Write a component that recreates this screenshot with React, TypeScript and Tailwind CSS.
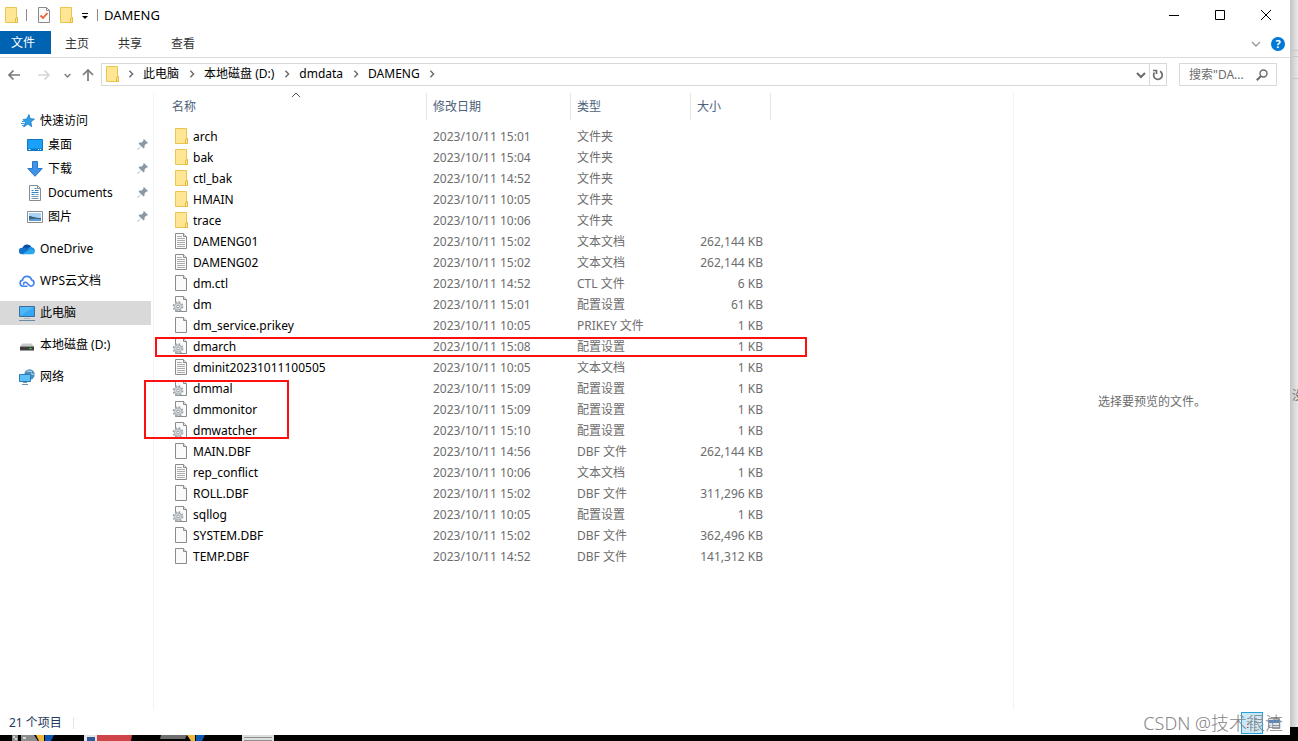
import type { ReactNode } from 'react';

// ─── Types ────────────────────────────────────────────────────────────────────

type FileKind = 'folder' | 'text' | 'blank' | 'config';

interface FileEntry {
    name: string;
    modified: string;
    type: string;
    size?: string;
    kind: FileKind;
}

// ─── Data ─────────────────────────────────────────────────────────────────────

const FILES: FileEntry[] = [
    { name: 'arch', modified: '2023/10/11 15:01', type: '文件夹', kind: 'folder' },
    { name: 'bak', modified: '2023/10/11 15:04', type: '文件夹', kind: 'folder' },
    { name: 'ctl_bak', modified: '2023/10/11 14:52', type: '文件夹', kind: 'folder' },
    { name: 'HMAIN', modified: '2023/10/11 10:05', type: '文件夹', kind: 'folder' },
    { name: 'trace', modified: '2023/10/11 10:06', type: '文件夹', kind: 'folder' },
    { name: 'DAMENG01', modified: '2023/10/11 15:02', type: '文本文档', size: '262,144 KB', kind: 'text' },
    { name: 'DAMENG02', modified: '2023/10/11 15:02', type: '文本文档', size: '262,144 KB', kind: 'text' },
    { name: 'dm.ctl', modified: '2023/10/11 14:52', type: 'CTL 文件', size: '6 KB', kind: 'blank' },
    { name: 'dm', modified: '2023/10/11 15:01', type: '配置设置', size: '61 KB', kind: 'config' },
    { name: 'dm_service.prikey', modified: '2023/10/11 10:05', type: 'PRIKEY 文件', size: '1 KB', kind: 'blank' },
    { name: 'dmarch', modified: '2023/10/11 15:08', type: '配置设置', size: '1 KB', kind: 'config' },
    { name: 'dminit20231011100505', modified: '2023/10/11 10:05', type: '文本文档', size: '1 KB', kind: 'text' },
    { name: 'dmmal', modified: '2023/10/11 15:09', type: '配置设置', size: '1 KB', kind: 'config' },
    { name: 'dmmonitor', modified: '2023/10/11 15:09', type: '配置设置', size: '1 KB', kind: 'config' },
    { name: 'dmwatcher', modified: '2023/10/11 15:10', type: '配置设置', size: '1 KB', kind: 'config' },
    { name: 'MAIN.DBF', modified: '2023/10/11 14:56', type: 'DBF 文件', size: '262,144 KB', kind: 'blank' },
    { name: 'rep_conflict', modified: '2023/10/11 10:06', type: '文本文档', size: '1 KB', kind: 'text' },
    { name: 'ROLL.DBF', modified: '2023/10/11 15:02', type: 'DBF 文件', size: '311,296 KB', kind: 'blank' },
    { name: 'sqllog', modified: '2023/10/11 10:05', type: '配置设置', size: '1 KB', kind: 'config' },
    { name: 'SYSTEM.DBF', modified: '2023/10/11 15:02', type: 'DBF 文件', size: '362,496 KB', kind: 'blank' },
    { name: 'TEMP.DBF', modified: '2023/10/11 14:52', type: 'DBF 文件', size: '141,312 KB', kind: 'blank' },
];

const CRUMBS = ['此电脑', '本地磁盘 (D:)', 'dmdata', 'DAMENG'];

// ─── Icons ────────────────────────────────────────────────────────────────────

function FolderIcon() {
    return (
        <svg width="13" height="16" viewBox="0 0 13 16" className="shrink-0" aria-hidden="true">
            <path d="M.5.5h11v10h1v5H.5z" fill="#ffe694" stroke="#eac54f" />
            <path d="M10.5 15.5v-4l2-1v5z" fill="#ffe9a2" stroke="#e5b93c" />
        </svg>
    );
}

function PageShape() {
    return (
        <>
            <path d="M3.5.5h8l3 3v12h-11z" fill="#fafafa" stroke="#8b8b8b" />
            <path d="M11.5.5v3h3" fill="#e4e4e4" stroke="#8b8b8b" />
        </>
    );
}

function FileIcon({ kind }: { kind: FileKind }) {
    if (kind === 'folder') {
        return <span className="flex w-4 shrink-0 pl-[3px]"><FolderIcon /></span>;
    }
    return (
        <svg width="16" height="16" viewBox="0 0 16 16" className="shrink-0" aria-hidden="true">
            <PageShape />
            {kind === 'text' && (
                <path d="M5 3.5h5M5 5.5h8M5 7.5h8M5 9.5h8M5 11.5h8M5 13.5h8" stroke="#adadad" />
            )}
            {kind === 'config' && (
                <>
                    <circle cx="6" cy="10.5" r="4.6" fill="#eceff1" stroke="#9aa3aa" strokeWidth="1.6" strokeDasharray="1.8 1.81" />
                    <circle cx="6" cy="10.5" r="3.6" fill="#d5dade" stroke="#a0a8ae" strokeWidth=".9" />
                    <circle cx="6" cy="10.5" r="1.4" fill="#fff" stroke="#8d959b" strokeWidth=".9" />
                </>
            )}
        </svg>
    );
}

interface ChevronProps {
    dir: 'down' | 'right' | 'up';
    size: number;
    className?: string;
    weight?: number;
}

function Chevron({ dir, size, className, weight = 1.4 }: ChevronProps) {
    const d = { down: 'M1 3l4 4 4-4', right: 'M3 1l4 4-4 4', up: 'M1 7l4-4 4 4' }[dir];
    return (
        <svg width={size} height={size} viewBox="0 0 10 10" fill="none" stroke="currentColor" strokeWidth={weight} className={className} aria-hidden="true">
            <path d={d} />
        </svg>
    );
}

function PinIcon() {
    return (
        <svg width="11" height="12" viewBox="0 0 11 12" className="shrink-0" aria-hidden="true">
            <path d="M7 0l4 4-1 .7-.7-.2-1.8 1.9.1 2.1-1.1 1L4 7 1 10.5l-.7.2.2-.8L3.9 7 1.5 4.5l1-1.1 2.1.1 1.9-1.8L6.2.8z" fill="#8b97a1" />
        </svg>
    );
}

const StarIcon = () => (
    <svg width="16" height="16" viewBox="0 0 16 16" aria-hidden="true">
        <path d="M10 1.500l1.200 4.100 4.300.5-3.600 2.700.8 5-3.800-2.700L4.700 14l1.600-4.800L4 6.500l3.600-.5z" fill="#2f9fe8" stroke="#1673bd" strokeWidth=".7" />
        <path d="M3 8.500h3M2 10.500h3M3 12.500h2" stroke="#3b96d8" />
    </svg>
);

const DesktopIcon = () => (
    <svg width="16" height="16" viewBox="0 0 16 16" aria-hidden="true">
        <path d="M.5 2.500h15v11H.5z" fill="#1ba1fb" stroke="#0b78c8" />
        <path d="M1 11.500h14v1.500H1z" fill="#0b78c8" />
        <path d="M1.500 12.500h2M11 12.500h1M13 12.500h1" stroke="#dff2ff" />
    </svg>
);

const DownloadIcon = () => (
    <svg width="16" height="16" viewBox="0 0 16 16" aria-hidden="true">
        <path d="M5.500.5h5v7h4.700L8 15.300.8 7.500h4.700z" fill="#3f94e9" stroke="#2b78c9" />
    </svg>
);

const DocumentIcon = () => (
    <svg width="16" height="16" viewBox="0 0 16 16" aria-hidden="true">
        <path d="M2.500.5h8l3 3v12h-11z" fill="#fff" stroke="#858c92" />
        <path d="M10.500.5v3h3" fill="none" stroke="#858c92" />
        <path d="M4.500 5.500h2M7.500 3.500h2M8 5.500h3.500M4.500 7.500h7M4.500 9.500h3" stroke="#2f86cc" />
        <path d="M8.500 9.500h3M4.500 11.500h7M4.500 13.500h7" stroke="#7d99b0" />
    </svg>
);

const PictureIcon = () => (
    <svg width="16" height="16" viewBox="0 0 16 16" aria-hidden="true">
        <path d="M.5 2.500h15v11H.5z" fill="#fff" stroke="#8d8d8d" />
        <path d="M2 4h12v8H2z" fill="#a9d4f5" />
        <path d="M2 7c3 0 6 2 12 2v3H2z" fill="#39667f" />
        <path d="M2 10.500c4-1 8-1 12 0V12H2z" fill="#5b9fd6" />
    </svg>
);

const OneDriveIcon = () => (
    <svg width="16" height="16" viewBox="0 0 16 16" aria-hidden="true">
        <path d="M3.500 7A5 5 0 0 1 12.700 6.200L8 10z" fill="#0a4fa6" />
        <path d="M3 13.200A3.200 3.200 0 0 1 3 6.800c2-.6 3.500.2 5 1.200l3 3-6 2.200z" fill="#1272cc" />
        <path d="M8 8.200c1.500-2 3-2.300 4.700-2 2 .4 3.300 1.900 3.300 3.800z" fill="#1a8ee0" />
        <path d="M3 13.200L9.500 8.900c2.500-1 4.500-.7 6 .6.900 1.900-.2 3.700-2.200 3.700z" fill="#2aa7ee" />
    </svg>
);

const WpsCloudIcon = () => (
    <svg width="16" height="16" viewBox="0 0 16 16" fill="none" stroke="#3f82f0" strokeWidth="1.600" aria-hidden="true">
        <path d="M8.500 13.200H4a3.100 3.100 0 0 1-.5-6.100 4.600 4.600 0 0 1 9-.2 3.200 3.200 0 0 1-.5 6.300c-2.500 0-3.500-4-5.700-4-1.600 0-2 1.600-1.300 2.600" />
    </svg>
);

const ComputerIcon = () => (
    <svg width="16" height="16" viewBox="0 0 16 16" aria-hidden="true">
        <path d="M.5 1.500h15v10H.5z" fill="#4fb9f7" stroke="#3b6f98" />
        <path d="M1 11L15 2v9z" fill="#36a7f2" />
        <path d="M5 13.500h6" stroke="#a9bccb" />
        <path d="M0 15.500h16" stroke="#6c8ba4" />
    </svg>
);

const DriveIcon = () => (
    <svg width="16" height="16" viewBox="0 0 16 16" aria-hidden="true">
        <path d="M3.500 6.500h9L15 9.500H1z" fill="#c9c9c9" />
        <path d="M1 9.500h14v4H1z" fill="#3d3d3d" />
        <path d="M10.500 11.500h2" stroke="#3ee03e" strokeWidth="1.400" />
    </svg>
);

const NetworkIcon = () => (
    <svg width="16" height="16" viewBox="0 0 16 16" aria-hidden="true">
        <circle cx="10.500" cy="5.500" r="5.200" fill="#4c8fbd" />
        <path d="M8 2.500c2-1.500 3 .5 5 0M12 5c1-1 1 1 3.500 0" fill="none" stroke="#b9dcf0" strokeWidth="1.200" />
        <path d="M.5 5.500h11v7H.5z" fill="#5cc0fa" stroke="#2f7db5" />
        <path d="M4 13.500h4M3 15.500h6" stroke="#7590a6" />
    </svg>
);

// ─── Title bar and ribbon ─────────────────────────────────────────────────────

function TitleBar() {
    return (
        <header className="flex h-[31px] items-center pr-px pb-px">
            <div className="flex flex-1 items-center pl-[5px]">
                <FolderIcon />
                <span className="ml-2 h-3 w-px bg-[#8c8c8c]" />
                <button type="button" aria-label="属性" className="ml-[10px]">
                    <svg width="14" height="16" viewBox="0 0 14 16" aria-hidden="true">
                        <path d="M1.500.5h8l3 3v12h-11z" fill="#fafafa" stroke="#8b8b8b" />
                        <path d="M9.500.5v3h3" fill="none" stroke="#8b8b8b" />
                        <path d="M3.500 8.500l2.500 2.500 4.500-5" fill="none" stroke="#e8642c" strokeWidth="1.800" />
                    </svg>
                </button>
                <button type="button" aria-label="新建文件夹" className="ml-[9px]"><FolderIcon /></button>
                <button type="button" aria-label="自定义快速访问工具栏" className="ml-2">
                    <svg width="8" height="8" viewBox="0 0 8 8" className="mt-[2px]" aria-hidden="true">
                        <path d="M1 1.500h6" stroke="#000" />
                        <path d="M1 4h6L4 7z" fill="#000" />
                    </svg>
                </button>
                <span className="ml-2 h-3 w-px bg-[#8c8c8c]" />
                <h1 className="ml-[6px] text-[13px] text-black">DAMENG</h1>
            </div>
            <button type="button" aria-label="最小化" className="flex h-full w-[46px] items-center justify-center">
                <svg width="10" height="10" viewBox="0 0 10 10" stroke="#000"><path d="M0 5.500h10" /></svg>
            </button>
            <button type="button" aria-label="最大化" className="flex h-full w-[46px] items-center justify-center">
                <svg width="10" height="10" viewBox="0 0 10 10" fill="none" stroke="#000"><path d="M.5.5h9v9h-9z" /></svg>
            </button>
            <button type="button" aria-label="关闭" className="flex h-full w-[46px] items-center justify-center">
                <svg width="10" height="10" viewBox="0 0 10 10" stroke="#000"><path d="M0 0l10 10M10 0L0 10" /></svg>
            </button>
        </header>
    );
}

function Ribbon() {
    return (
        <div className="flex h-[27px] items-start border-b border-[#dadbdc]">
            <button type="button" className="h-[23px] w-[51px] bg-[#0063b1] pr-[5px] text-white">文件</button>
            <div className="flex pr-px">
                {['主页', '共享', '查看'].map(tab => (
                    <button key={tab} type="button" className="h-[26px] w-[53px] pr-px text-[#333]">{tab}</button>
                ))}
            </div>
            <button type="button" aria-label="展开功能区" className="ml-auto flex h-[26px] items-center text-[#9a9a9a]">
                <Chevron dir="down" size={10} />
            </button>
            <button type="button" aria-label="帮助" className="mt-[6px] mr-[5px] ml-[10px] flex size-[14px] items-center justify-center rounded-full bg-[#0078d7] text-[11px] font-bold text-white">?</button>
        </div>
    );
}

// ─── Address bar ──────────────────────────────────────────────────────────────

function CrumbArrow({ className }: { className: string }) {
    return (
        <span className={`flex justify-center text-[#6b6b6b] ${className}`}>
            <Chevron dir="right" size={8} weight={1.8} />
        </span>
    );
}

function AddressBar() {
    return (
        <div className="flex h-[35px] items-start pt-[5px] pr-[13px]">
            <nav aria-label="导航" className="flex h-[24px] w-[101px] shrink-0 items-center pl-[8px] text-[#7a7a7a]">
                <button type="button" aria-label="后退">
                    <svg width="12" height="12" viewBox="0 0 12 12" fill="none" stroke="currentColor" strokeWidth="1.700"><path d="M12 6H1M5.500 1.500L1 6l4.500 4.500" /></svg>
                </button>
                <button type="button" aria-label="前进" className="ml-[18px] text-[#d6d6d6]">
                    <svg width="12" height="12" viewBox="0 0 12 12" fill="none" stroke="currentColor" strokeWidth="1.700"><path d="M0 6h11M6.500 1.500L11 6l-4.500 4.500" /></svg>
                </button>
                <button type="button" aria-label="最近浏览的位置" className="ml-[14px]"><Chevron dir="down" size={7} weight={2} /></button>
                <button type="button" aria-label="上移" className="ml-[11px]">
                    <svg width="12" height="12" viewBox="0 0 12 12" fill="none" stroke="currentColor" strokeWidth="1.700"><path d="M6 12V1M1 6l5-5 5 5" /></svg>
                </button>
            </nav>
            <div className="flex h-[23px] flex-1 border border-[#d9d9d9]">
                <div className="flex flex-1 items-center pb-[2px] pl-1 text-black">
                    <FolderIcon />
                    <CrumbArrow className="w-6" />
                    {CRUMBS.map(crumb => (
                        <span key={crumb} className="flex items-center">
                            <a href="#" className="leading-4">{crumb}</a>
                            <CrumbArrow className="w-[25px]" />
                        </span>
                    ))}
                </div>
                <button type="button" aria-label="以前的位置" className="flex w-4 items-center justify-center text-[#6b6b6b]"><Chevron dir="down" size={10} weight={2} /></button>
                <button type="button" aria-label="刷新" className="flex w-[17px] items-center justify-center border-l border-[#d9d9d9] text-[#6b6b6b]">
                    <svg width="12" height="12" viewBox="0 0 12 12" fill="none" stroke="currentColor" strokeWidth="1.700" aria-hidden="true">
                        <path d="M2.500 3.500A4.300 4.300 0 1 0 8 2.300" />
                        <path d="M1 1.500h3.500V5" />
                    </svg>
                </button>
            </div>
            <label className="ml-3 flex h-[23px] w-[98px] items-center border border-[#d9d9d9] pr-2 pl-[9px] text-[#6b6b6b]">
                <input type="text" aria-label="搜索" placeholder={'搜索"DA...'} className="w-0 flex-1 outline-none placeholder:text-[#6d6d6d]" />
                <svg width="12" height="12" viewBox="0 0 12 12" fill="none" stroke="currentColor" aria-hidden="true">
                    <circle cx="7.500" cy="4.500" r="3.500" strokeWidth="1.400" />
                    <path d="M5 7L.8 11.200" strokeWidth="2" />
                </svg>
            </label>
        </div>
    );
}

// ─── Navigation pane ──────────────────────────────────────────────────────────

interface NavItemProps {
    icon: ReactNode;
    label: string;
    nested?: boolean;
    selected?: boolean;
}

function NavItem({ icon, label, nested, selected }: NavItemProps) {
    return (
        <a
            href="#"
            className={`flex h-6 items-center gap-[5px] pr-[3px] text-black ${nested ? 'pl-[27px]' : 'pl-[19px]'} ${selected ? 'bg-[#d9d9d9]' : ''}`}
        >
            {icon}
            <span className="flex-1 leading-4">{label}</span>
            {nested && <PinIcon />}
        </a>
    );
}

function NavPane() {
    return (
        <aside className="flex w-[154px] shrink-0 flex-col gap-2 border-r border-[#f3f3f3] pt-4 pr-[2px]">
            <div>
                <NavItem icon={<StarIcon />} label="快速访问" />
                <NavItem nested icon={<DesktopIcon />} label="桌面" />
                <NavItem nested icon={<DownloadIcon />} label="下载" />
                <NavItem nested icon={<DocumentIcon />} label="Documents" />
                <NavItem nested icon={<PictureIcon />} label="图片" />
            </div>
            <NavItem icon={<OneDriveIcon />} label="OneDrive" />
            <NavItem icon={<WpsCloudIcon />} label="WPS云文档" />
            <NavItem selected icon={<ComputerIcon />} label="此电脑" />
            <NavItem icon={<DriveIcon />} label="本地磁盘 (D:)" />
            <NavItem icon={<NetworkIcon />} label="网络" />
        </aside>
    );
}

// ─── File list ────────────────────────────────────────────────────────────────

function FileList() {
    return (
        <main className="relative min-w-0 flex-1">
            <table className="w-[617px] table-fixed border-separate border-spacing-0 text-left text-[#6d6d6d]">
                <colgroup>
                    <col className="w-[273px]" />
                    <col className="w-[144px]" />
                    <col className="w-[120px]" />
                    <col className="w-[80px]" />
                </colgroup>
                <thead className="text-[#4c607a]">
                    <tr className="h-[27px]">
                        <th className="relative border-r border-[#e5e5e5] p-0 pl-[18px] font-normal">
                            名称
                            <Chevron dir="up" size={10} weight={1} className="absolute top-[-3px] right-[125px] text-[#555]" />
                        </th>
                        <th className="border-r border-[#e5e5e5] p-0 pl-[6px] font-normal">修改日期</th>
                        <th className="border-r border-[#e5e5e5] p-0 pl-[6px] font-normal">类型</th>
                        <th className="border-r border-[#e5e5e5] p-0 pl-[6px] font-normal">大小</th>
                    </tr>
                </thead>
                <tbody className="before:block before:h-[6px]">
                    {FILES.map(file => (
                        <tr key={file.name} className="h-[21px]">
                            <td className="p-0 pl-[18px]">
                                <div className="flex h-[21px] items-start gap-[5px] text-black">
                                    <span className="pt-[2px]"><FileIcon kind={file.kind} /></span>
                                    <span className="leading-[21px]">{file.name}</span>
                                </div>
                            </td>
                            <td className="p-0 pl-[6px]">{file.modified}</td>
                            <td className="p-0 pl-[6px]">{file.type}</td>
                            <td className="p-0 pr-2 text-right">{file.size}</td>
                        </tr>
                    ))}
                </tbody>
            </table>

            {/* Highlight frames drawn over the rows */}
            <div className="pointer-events-none absolute top-[244px] left-[1px] h-[20px] w-[652px] border-2 border-[#ff1010]" />
            <div className="pointer-events-none absolute top-[287px] left-[-10px] h-[59px] w-[145px] border-2 border-[#ff1010]" />
        </main>
    );
}

// ─── Status bar ───────────────────────────────────────────────────────────────

function StatusBar() {
    return (
        <footer className="relative flex h-[25px] items-center pr-[5px] pl-[9px] text-[#1e395b]">
            <span>21 个项目</span>
            <span className="ml-[11px] h-3 w-px bg-[#e5e5e5]" />
            <button type="button" aria-label="详细信息" className="ml-auto flex size-[22px] items-center justify-center border border-[#26a0da] bg-[#cbe8f6]">
                <svg width="14" height="12" viewBox="0 0 14 12" stroke="#8fa5b2">
                    <path d="M2 1.500h2M5 1.500h3M9 1.500h3M2 4.500h2M5 4.500h3M9 4.500h3M2 7.500h2M5 7.500h3M9 7.500h3M2 10.500h2M5 10.500h3M9 10.500h3" />
                    <path d="M2 7.500h1M2 10.500h1" stroke="#d83b2b" />
                </svg>
            </button>
            <button type="button" aria-label="大图标" className="flex size-[22px] items-center justify-center">
                <svg width="12" height="10" viewBox="0 0 12 10"><path d="M.5.5h11v9H.5z" fill="#d7e8f8" stroke="#999" /><path d="M1 2h10v3H1z" fill="#4a88d8" /></svg>
            </button>
            <span className="absolute right-[7px] bottom-0 text-[18px] leading-6 font-light text-[#858585]">CSDN @技术很渣</span>
        </footer>
    );
}

// ─── Desktop behind the window ────────────────────────────────────────────────

function BackWindow() {
    return (
        <div className="mb-[8px] flex w-2 shrink-0 flex-col overflow-hidden bg-linear-to-r from-[#c4c4c4] to-[#e9e9e9] text-[#6d6d6d]">
            <div className="h-[51px] border-b border-[#c8c8c8]" />
            <div className="h-[6px] border-b border-[#c8c8c8]" />
            <div className="h-[22px] border-b border-[#c8c8c8]" />
            <div className="flex flex-1 items-center overflow-hidden pb-[15px] pl-[2px]">
                <span className="shrink-0">没</span>
            </div>
        </div>
    );
}

function DesktopStrip() {
    return (
        <div className="flex h-[6px] shrink-0 overflow-hidden bg-black pl-3">
            <svg width="42" height="6" viewBox="0 0 42 6" aria-hidden="true">
                <path d="M0 0h6v6H0zM9 0h13l4 6H9z" fill="#8d8d8d" />
                <path d="M1 1h2v2H1zM3 3h2v2H3zM11 2h3v2h-3z" fill="#d5d5d5" />
                <path d="M24 0h8v6h-5z" fill="#f0b838" />
                <path d="M33 0h9l-3 6h-6z" fill="#0f56b3" />
            </svg>
            <svg width="48" height="6" viewBox="0 0 48 6" className="ml-[30px]" aria-hidden="true">
                <path d="M0 0h13v6H0z" fill="#e4e4e4" />
                <path d="M3 2h8v4H3z" fill="#315b96" />
                <path d="M13 0h35l-1 6H13z" fill="#cf4449" />
            </svg>
            <svg width="45" height="6" viewBox="0 0 45 6" className="ml-[28px]" aria-hidden="true">
                <path d="M1 0h26l-2 4H0z" fill="#6e6e6e" />
                <path d="M27 0h8v6h-4z" fill="#f0b838" />
                <path d="M36 0h9l-3 6h-6z" fill="#0f56b3" />
            </svg>
            <svg width="32" height="6" viewBox="0 0 32 6" className="ml-[37px]" aria-hidden="true">
                <path d="M0 0h32v6H0z" fill="#dedede" />
                <path d="M2 2.500h28M2 5.500h28" stroke="#8f8f8f" />
            </svg>
        </div>
    );
}

// ─── App ──────────────────────────────────────────────────────────────────────

export default function App() {
    return (
        <div className="flex min-h-screen flex-col bg-black font-['Noto_Sans','Noto_Sans_CJK_SC',sans-serif] text-[12px] leading-4">
            <div className="flex flex-1">
                <div className="flex min-w-0 flex-1 flex-col bg-white">
                    <TitleBar />
                    <Ribbon />
                    <AddressBar />
                    <div className="flex flex-1">
                        <NavPane />
                        <FileList />
                        <section aria-label="预览" className="flex w-[277px] shrink-0 items-center justify-center border-l border-[#f3f3f3] text-[#6d6d6d]">
                            选择要预览的文件。
                        </section>
                    </div>
                    <StatusBar />
                </div>
                <BackWindow />
            </div>
            <DesktopStrip />
        </div>
    );
}
